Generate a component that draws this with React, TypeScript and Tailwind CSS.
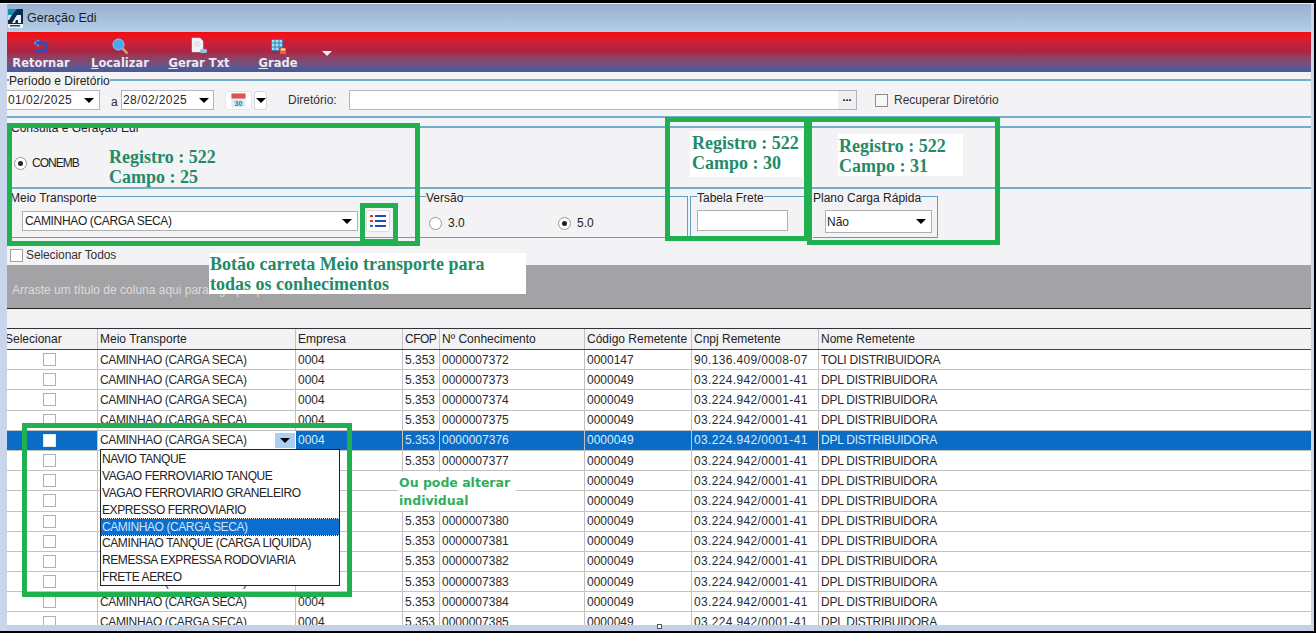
const rows = [
  ['0000007372', '0000147', '90.136.409/0008-07', 'TOLI DISTRIBUIDORA'],
  ['0000007373', '0000049', '03.224.942/0001-41', 'DPL DISTRIBUIDORA'],
  ['0000007374', '0000049', '03.224.942/0001-41', 'DPL DISTRIBUIDORA'],
  ['0000007375', '0000049', '03.224.942/0001-41', 'DPL DISTRIBUIDORA'],
  ['0000007376', '0000049', '03.224.942/0001-41', 'DPL DISTRIBUIDORA'],
  ['0000007377', '0000049', '03.224.942/0001-41', 'DPL DISTRIBUIDORA'],
  ['0000007378', '0000049', '03.224.942/0001-41', 'DPL DISTRIBUIDORA'],
  ['0000007379', '0000049', '03.224.942/0001-41', 'DPL DISTRIBUIDORA'],
  ['0000007380', '0000049', '03.224.942/0001-41', 'DPL DISTRIBUIDORA'],
  ['0000007381', '0000049', '03.224.942/0001-41', 'DPL DISTRIBUIDORA'],
  ['0000007382', '0000049', '03.224.942/0001-41', 'DPL DISTRIBUIDORA'],
  ['0000007383', '0000049', '03.224.942/0001-41', 'DPL DISTRIBUIDORA'],
  ['0000007384', '0000049', '03.224.942/0001-41', 'DPL DISTRIBUIDORA'],
  ['0000007385', '0000049', '03.224.942/0001-41', 'DPL DISTRIBUIDORA'],
];

const dropdownItems = [
  'NAVIO TANQUE',
  'VAGAO FERROVIARIO TANQUE',
  'VAGAO FERROVIARIO GRANELEIRO',
  'EXPRESSO FERROVIARIO',
  'CAMINHAO (CARGA SECA)',
  'CAMINHAO TANQUE (CARGA LIQUIDA)',
  'REMESSA EXPRESSA RODOVIARIA',
  'FRETE AEREO',
];

function Arrow({ className = 'border-t-black' }: { className?: string }) {
  return <span className={`h-0 w-0 border-x-[5px] border-t-[5px] border-x-transparent ${className}`} />;
}

function GroupLabel({ text, className = 'w-[2px]' }: { text: string; className?: string }) {
  return (
    <div className="flex h-[14px] items-center text-[12px] leading-none text-[#222]">
      <span className={`h-[2px] bg-[#74aecd] ${className}`} />
      <span className="mt-[2px]">{text}</span>
      <span className="h-[2px] flex-1 bg-[#74aecd]" />
    </div>
  );
}

function Radio({ checked }: { checked?: boolean }) {
  return (
    <span className="flex h-[13px] w-[13px] items-center justify-center rounded-full border border-[#9a9a9a] bg-white">
      {checked && <span className="h-[5px] w-[5px] rounded-full bg-[#222]" />}
    </span>
  );
}

function Check({ className = 'border-[#b0b0b0] bg-white' }: { className?: string }) {
  return <span className={`block h-[13px] w-[13px] border ${className}`} />;
}

function ToolButton({ icon, label, first }: { icon: React.ReactNode; label: React.ReactNode; first?: boolean }) {
  return (
    <div className={`flex w-[66px] flex-col items-center ${first ? 'ml-px' : ''}`}>
      <div className="flex h-[21px] items-end">{icon}</div>
      <span className="whitespace-nowrap font-['DejaVu_Sans',sans-serif] text-[11.5px] leading-[17px] font-bold text-[#e8eaf4]">
        {label}
      </span>
    </div>
  );
}

function ReturnIcon() {
  return (
    <svg width="18" height="17" viewBox="0 0 18 17">
      <path d="M7 2 L3 5 L7 8" fill="none" stroke="#4aa3e8" strokeWidth="2" />
      <path d="M4 5 H11 Q15 5 15 9 Q15 13 11 13 H3" fill="none" stroke="#2a4fc4" strokeWidth="3" />
    </svg>
  );
}

function SearchIcon() {
  return (
    <svg width="17" height="17" viewBox="0 0 17 17">
      <circle cx="6.5" cy="6.5" r="5.5" fill="#4aa8ee" stroke="#8fcdf5" strokeWidth="1" />
      <path d="M10.5 10.5 L15.5 15.5" stroke="#c9a36a" strokeWidth="2.5" />
    </svg>
  );
}

function DocIcon() {
  return (
    <svg width="18" height="18" viewBox="0 0 18 18">
      <path d="M2 1 H10 L13 4 V15 H2 Z" fill="#f4f4f8" stroke="#d8d8e4" strokeWidth="0.5" />
      <path d="M4 5 H10 M4 7 H11 M4 9 H10" stroke="#cfd2dd" strokeWidth="1" />
      <rect x="10" y="12" width="7" height="4" rx="1.5" fill="#8fc4e8" />
    </svg>
  );
}

function GridIcon() {
  return (
    <svg width="17" height="17" viewBox="0 0 17 17">
      <rect x="1" y="1" width="12" height="12" fill="#2f7fb8" />
      <path d="M2 2 H4.5 V4.5 H2 Z M5.5 2 H8.5 V4.5 H5.5 Z M9.5 2 H12 V4.5 H9.5 Z M2 5.5 H4.5 V8.5 H2 Z M5.5 5.5 H8.5 V8.5 H5.5 Z M9.5 5.5 H12 V8.5 H9.5 Z M2 9.5 H4.5 V12 H2 Z M5.5 9.5 H8.5 V12 H5.5 Z" fill="#a8e0f4" />
      <rect x="10" y="10" width="6" height="6" fill="#e8642c" />
      <rect x="11" y="10.5" width="4" height="2" fill="#f4e6d8" />
    </svg>
  );
}

function CalendarIcon() {
  return (
    <svg width="15" height="15" viewBox="0 0 15 15">
      <rect x="0.5" y="0.5" width="14" height="14" fill="#dcebf8" />
      <rect x="0.5" y="0.5" width="14" height="5" fill="#d9534f" />
      <text x="7.5" y="12.5" textAnchor="middle" fontSize="7" fontWeight="700" fill="#2a6fc4" fontFamily="Liberation Sans">30</text>
    </svg>
  );
}

function LogoIcon() {
  return (
    <svg width="15" height="19" viewBox="0 0 15 19">
      <rect width="15" height="19" fill="#0a2c52" />
      <path d="M0 0 H9 L4 6 H0 Z" fill="#1a8fb4" />
      <path d="M0 6 H4 L1 11 H0 Z" fill="#bfe4ee" />
      <path d="M4 14 L9 6 H13 V14 H10 V11 H8 L7 14 Z" fill="#e8f2f8" />
      <rect y="15" width="15" height="4" fill="#eef2f4" />
      <rect x="2" y="16" width="10" height="1.5" fill="#33485a" />
    </svg>
  );
}

function ListIcon() {
  return (
    <svg width="16" height="14" viewBox="0 0 16 14">
      <rect x="0" y="1" width="3" height="2" fill="#d9363e" />
      <rect x="0" y="6" width="3" height="2" fill="#d9363e" />
      <rect x="0" y="11" width="3" height="2" fill="#2a6fc4" />
      <rect x="5" y="1" width="11" height="2" fill="#1f4fa8" />
      <rect x="5" y="6" width="11" height="2" fill="#1f4fa8" />
      <rect x="5" y="11" width="11" height="2" fill="#1f4fa8" />
    </svg>
  );
}

function Cell({ w, className = '', children }: { w: string; className?: string; children?: React.ReactNode }) {
  return (
    <div className={`flex h-full shrink-0 items-center overflow-hidden whitespace-nowrap border-r border-[#c2c2c2] pl-[2px] ${w} ${className}`}>
      {children}
    </div>
  );
}

function DataRow({ row, selected }: { row: string[]; selected: boolean }) {
  return (
    <div
      className={`flex h-[20.2px] shrink-0 items-center border-b border-[#c2c2c2] ${
        selected ? 'bg-[#0b6cc6] text-[#dcebf8]' : 'bg-white text-[#2a2a2a]'
      }`}
    >
      <Cell w="w-[91px]" className="justify-center pr-[7px]">
        <Check className={selected ? 'border-[#e8e8e8] bg-white' : 'border-[#b0b0b0] bg-white'} />
      </Cell>
      {selected ? (
        <div className="flex h-full w-[198px] shrink-0 items-center justify-between bg-white pl-[2px] pr-px text-[#2a2a2a]">
          <span className="tracking-[-0.35px]">CAMINHAO (CARGA SECA)</span>
          <span className="flex h-[15px] w-[20px] items-center justify-center bg-[#a9d0f2]">
            <Arrow />
          </span>
        </div>
      ) : (
        <Cell w="w-[198px]" className="tracking-[-0.35px]">CAMINHAO (CARGA SECA)</Cell>
      )}
      <Cell w="w-[107px]">0004</Cell>
      <Cell w="w-[37px]">5.353</Cell>
      <Cell w="w-[145px]">{row[0]}</Cell>
      <Cell w="w-[107px]">{row[1]}</Cell>
      <Cell w="w-[127px]" className="tracking-[0.35px]">{row[2]}</Cell>
      <div className="whitespace-nowrap pl-[2px] tracking-[-0.25px]">{row[3]}</div>
    </div>
  );
}

export default function App() {
  return (
    <div className="relative h-[633px] w-[1316px] overflow-hidden bg-black font-['Liberation_Sans',sans-serif] text-[12px]">
      <div className="mt-[3px] ml-0 flex h-[628px] w-[1314px] flex-col overflow-hidden border-t border-[#e8edf5] bg-[#c9d5ea] pr-[3px] pl-[7px]">
        {/* title bar */}
        <div className="flex h-[28px] shrink-0 items-center gap-[4px] bg-gradient-to-b from-[#98b0cd] to-[#b4cfea] pl-px pt-px text-[12.5px] text-[#1c1c1c]">
          <LogoIcon />
          <span>Geração Edi</span>
        </div>

        {/* toolbar */}
        <div className="flex h-[40px] shrink-0 items-start gap-[13px] bg-gradient-to-b from-[#f90808] via-[#a82444] to-[#3c5ca4] pt-[2px]">
          <ToolButton first icon={<ReturnIcon />} label="Retornar" />
          <ToolButton icon={<SearchIcon />} label={<><u>L</u>ocalizar</>} />
          <ToolButton icon={<DocIcon />} label={<><u>G</u>erar Txt</>} />
          <ToolButton icon={<GridIcon />} label={<><u>G</u>rade</>} />
          <span className="-ml-[2px] mt-[17px]">
            <Arrow className="block border-t-[#eef]" />
          </span>
        </div>

        {/* resto da tela */}
        <div className="flex min-h-0 flex-1 flex-col bg-[#f3f2f5]">
          <div className="mt-px">
            <GroupLabel text="Período e Diretório" />
          </div>
          <div className="mt-[3px] flex h-[20px] shrink-0 items-center text-[#2a2a2a]">
            <div className="flex h-[20px] w-[93px] items-center justify-between border-y border-r border-[#b4b4b4] bg-white pr-[5px]">
              <span className="pl-px tracking-[0.4px]">01/02/2025</span>
              <Arrow />
            </div>
            <span className="ml-[11px] mt-[3px] w-[10px]">a</span>
            <div className="flex h-[20px] w-[93px] items-center justify-between border border-[#b4b4b4] bg-white pr-[4px] pl-px">
              <span className="tracking-[0.4px]">28/02/2025</span>
              <Arrow />
            </div>
            <span className="ml-[11px] flex h-[19px] w-[27px] items-center justify-center rounded-[3px] border border-[#e4e4e8] bg-white">
              <CalendarIcon />
            </span>
            <span className="ml-[2px] flex h-[19px] w-[13px] items-center justify-center rounded-[3px] border border-[#d8d8dc] bg-white">
              <Arrow />
            </span>
            <span className="ml-[21px] w-[61px] text-[#333]">Diretório:</span>
            <div className="flex h-[20px] w-[508px] items-center justify-end border border-[#b4b4b4] bg-white">
              <span className="flex h-full w-[18px] items-start justify-center bg-[#f0f0f2] text-[11px] leading-[13px] font-bold text-black">...</span>
            </div>
            <span className="ml-[18px] mr-[6px]">
              <Check className="border-[#8c8c8c] bg-[#f8f8f8]" />
            </span>
            <span className="text-[#333]">Recuperar Diretório</span>
          </div>
          <div className="mt-[6px] h-[2px] shrink-0 bg-[#74aecd]" />

          <div className="mt-[2px]">
            <GroupLabel text="Consulta e Geração Edi" className="w-[4px]" />
          </div>
          <div className="flex h-[53px] shrink-0 items-center gap-[5px] pl-[7px] pt-[5px]">
            <Radio checked />
            <span className="tracking-[-1px] text-[#222]">CONEMB</span>
          </div>
          <div className="h-[2px] shrink-0 bg-[#74aecd]" />

          <div className="mt-px flex h-[48px] shrink-0 items-start">
            <div className="mt-[6px] h-[42px] w-[681px] shrink-0 border-t border-r border-b border-[#5f9fc4]">
              <div className="-mt-[6px] flex">
                <div className="w-[419px]">
                  <span className="ml-[3px] block w-fit bg-[#f3f2f5] leading-[14px] text-[#222]">Meio Transporte</span>
                  <div className="mt-[5px] flex items-center">
                    <div className="ml-[15px] flex h-[20px] w-[336px] items-center justify-between border border-[#b0b0b0] bg-white pr-[5px] pl-[2px] text-[#222]">
                      <span className="tracking-[-0.35px]">CAMINHAO (CARGA SECA)</span>
                      <Arrow />
                    </div>
                    <span className="ml-[8px] flex h-[22px] w-[24px] items-center justify-center rounded-[3px] border border-[#dcdce0] bg-white">
                      <ListIcon />
                    </span>
                  </div>
                </div>
                <div>
                  <span className="block w-fit bg-[#f3f2f5] leading-[14px] text-[#222]">Versão</span>
                  <div className="mt-[9px] flex items-center text-[#222]">
                    <span className="ml-[3px]"><Radio /></span>
                    <span className="ml-[6px] w-[110px]">3.0</span>
                    <Radio checked />
                    <span className="ml-[6px]">5.0</span>
                  </div>
                </div>
              </div>
            </div>
            <div className="ml-[2px] mt-[6px] h-[42px] w-[116px] shrink-0 border border-[#5f9fc4]">
              <span className="-mt-[6px] ml-[6px] block w-fit bg-[#f3f2f5] leading-[14px] text-[#222]">Tabela Frete</span>
              <div className="ml-[6px] mt-[5px] h-[21px] w-[91px] border border-[#b0b0b0] bg-white" />
            </div>
            <div className="ml-[7px] mt-[6px] h-[42px] w-[125px] shrink-0 border-t border-r border-b border-[#5f9fc4]">
              <span className="-mt-[6px] block w-fit bg-[#f3f2f5] leading-[14px] text-[#222]">Plano Carga Rápida</span>
              <div className="ml-[12px] mt-[5px] flex h-[23px] w-[107px] items-center justify-between border border-[#b0b0b0] bg-white pr-[5px] pl-px text-[#222]">
                <span>Não</span>
                <Arrow />
              </div>
            </div>
          </div>

          <div className="flex h-[27px] shrink-0 items-center gap-[3px] pl-[3px] pt-[7px] tracking-[-0.1px] text-[#333]">
            <Check className="border-[#a0a0a0] bg-white" />
            <span>Selecionar Todos</span>
          </div>

          {/* agrupador */}
          <div className="flex h-[44px] shrink-0 items-center border-b border-[#222] bg-[#a3a2a5] pl-[5px] pt-[7px] text-[#dcdcdc]">
            Arraste um título de coluna aqui para agrupar por essa coluna
          </div>
          <div className="h-[20px] shrink-0 border-b border-[#333]" />

          {/* grade */}
          <div className="flex h-[21px] shrink-0 items-center border-b border-[#444] text-[#222]">
            <Cell w="w-[91px] border-[#555]"><span className="-ml-[4px]">Selecionar</span></Cell>
            <Cell w="w-[198px] border-[#555]">Meio Transporte</Cell>
            <Cell w="w-[107px] border-[#555]">Empresa</Cell>
            <Cell w="w-[37px] border-[#555]" className="tracking-[-0.5px]">CFOP</Cell>
            <Cell w="w-[145px] border-[#555]">Nº Conhecimento</Cell>
            <Cell w="w-[107px] border-[#555]">Código Remetente</Cell>
            <Cell w="w-[127px] border-[#555]">Cnpj Remetente</Cell>
            <div className="whitespace-nowrap pl-[2px]">Nome Remetente</div>
          </div>
          <div className="flex min-h-0 flex-1 flex-col overflow-hidden">
            {rows.map((row, i) => (
              <DataRow key={row[0]} row={row} selected={i === 4} />
            ))}
          </div>
        </div>

        {/* barra de rolagem */}
        <div className="relative h-[6px] shrink-0 bg-[#c3d0e6]">
          <span className="absolute left-[650px] top-[-1px] h-[5px] w-[5px] border border-[#555] bg-white" />
        </div>
      </div>

      {/* lista do combo */}
      <div className="absolute left-[100px] top-[449px] h-[137px] w-[240px] border border-[#222] bg-white pt-px tracking-[-0.4px] text-[#222]">
        {dropdownItems.map((item, i) => (
          <div
            key={item}
            className={`h-[16.9px] pl-px leading-[17px] whitespace-nowrap ${
              i === 4 ? 'bg-[#0a6fd0] text-[#cfe4f8] outline-1 outline-dotted outline-[#222]' : ''
            }`}
          >
            {item}
          </div>
        ))}
      </div>

      {/* marcacoes em verde */}
      <div className="absolute left-[7px] top-[123px] h-[123px] w-[413px] border-[5px] border-[#21b04f]" />
      <div className="absolute left-[360px] top-[203px] h-[41px] w-[38px] border-[5px] border-[#21b04f]" />
      <div className="absolute left-[665px] top-[117px] h-[124px] w-[144px] border-[5px] border-[#21b04f]" />
      <div className="absolute left-[807px] top-[117px] h-[128px] w-[193px] border-[5px] border-[#21b04f]" />
      <div className="absolute left-[22px] top-[423px] h-[174px] w-[330px] border-[5px] border-[#21b04f]" />

      {/* notas */}
      <div className="absolute left-[109px] top-[147px] font-['Liberation_Serif',serif] text-[18px] leading-[20px] font-bold text-[#238a68]">
        Registro : 522<br />Campo : 25
      </div>
      <div className="absolute left-[690px] top-[131px] h-[46px] w-[113px] bg-white pl-[2px] pt-[2px] font-['Liberation_Serif',serif] text-[18px] leading-[20px] font-bold text-[#238a68]">
        Registro : 522<br />Campo : 30
      </div>
      <div className="absolute left-[838px] top-[134px] h-[42px] w-[125px] bg-white pl-px pt-[2px] font-['Liberation_Serif',serif] text-[18px] leading-[20px] font-bold text-[#238a68]">
        Registro : 522<br />Campo : 31
      </div>
      <div className="absolute left-[209px] top-[253px] h-[41px] w-[317px] bg-white pl-px pt-px font-['Liberation_Serif',serif] text-[18px] leading-[20px] font-bold text-[#238a68]">
        Botão carreta Meio transporte para<br />todas os conhecimentos
      </div>
      <div className="absolute left-[398px] top-[472px] h-[39px] w-[118px] bg-white pl-px pt-[2px] font-['DejaVu_Sans',sans-serif] text-[12.5px] leading-[18px] font-bold text-[#2fae5c]">
        Ou pode alterar<br />individual
      </div>
    </div>
  );
}
